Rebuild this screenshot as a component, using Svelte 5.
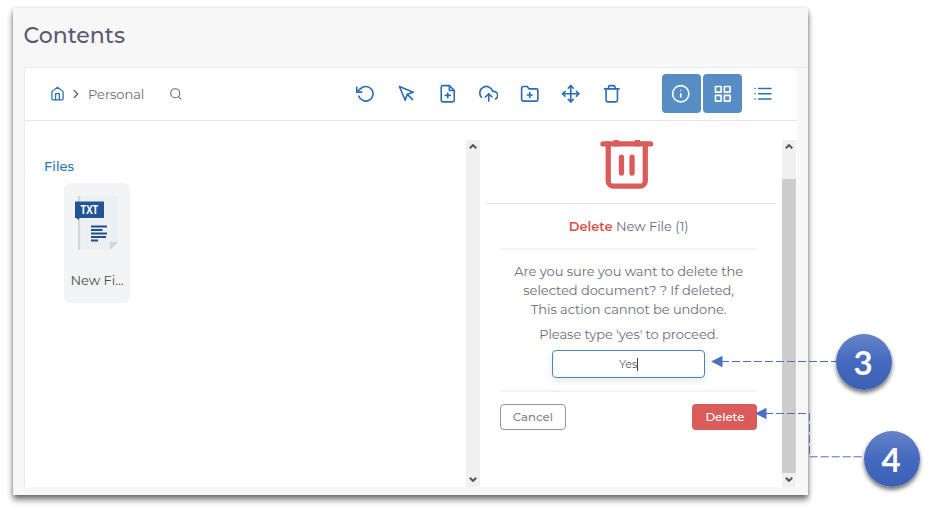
<script>
  const tools = [
    { name: 'undo', paths: ['M1 4v6h6', 'M3.51 15a9 9 0 1 0 2.13-9.36L1 10'] },
    { name: 'select', paths: ['M3 3l7.07 16.97 2.51-7.39 7.39-2.51L3 3z', 'M13 13l6 6'] },
    { name: 'new file', paths: ['M14 2H6a2 2 0 0 0-2 2v16a2 2 0 0 0 2 2h12a2 2 0 0 0 2-2V8z', 'M14 2v6h6', 'M12 11v6', 'M9 14h6'] },
    { name: 'upload', paths: ['M16 16l-4-4-4 4', 'M12 12v9', 'M20.39 18.39A5 5 0 0 0 18 9h-1.26A8 8 0 1 0 3 16.3'] },
    { name: 'new folder', paths: ['M22 19a2 2 0 0 1-2 2H4a2 2 0 0 1-2-2V5a2 2 0 0 1 2-2h5l2 3h9a2 2 0 0 1 2 2z', 'M12 10.5v6', 'M9 13.5h6'] },
    { name: 'move', paths: ['M5 9l-3 3 3 3', 'M9 5l3-3 3 3', 'M15 19l-3 3-3-3', 'M19 9l3 3-3 3', 'M2 12h20', 'M12 2v20'] },
    { name: 'trash', paths: ['M3 6h18', 'M19 6v14a2 2 0 0 1-2 2H7a2 2 0 0 1-2-2V6m3 0V4a2 2 0 0 1 2-2h4a2 2 0 0 1 2 2v2'] }
  ];
  const views = [
    { name: 'info', on: true, paths: ['M22 12a10 10 0 1 1-20 0 10 10 0 0 1 20 0z', 'M12 16v-4', 'M12 8h.01'] },
    { name: 'grid', on: true, paths: ['M3 3h7v7H3z', 'M14 3h7v7h-7z', 'M14 14h7v7h-7z', 'M3 14h7v7H3z'] },
    { name: 'list', on: false, paths: ['M7 5.500h15', 'M7 12h15', 'M7 18.500h15', 'M2.500 5.500h.01', 'M2.500 12h.01', 'M2.500 18.500h.01'] }
  ];
</script>

{#snippet icon(paths, size)}
  <svg class="icon" width={size} height={size} viewBox="0 0 24 24">
    {#each paths as d}<path {d} />{/each}
  </svg>
{/snippet}

{#snippet arrow(d)}
  <div class="arrow"><svg width="8" height="5" viewBox="0 0 8 5"><path {d} /></svg></div>
{/snippet}

<div class="stage">
  <main class="frame">
    <h1>Contents</h1>
    <section class="panel">
      <header>
        <nav class="crumbs">
          <span class="home">{@render icon(['M3 9l9-7 9 7v11a2 2 0 0 1-2 2H5a2 2 0 0 1-2-2z', 'M9 22V12h6v10'], 15)}</span>
          <span class="chev">{@render icon(['M9 18l6-6-6-6'], 14)}</span>
          <span class="crumb">Personal</span>
          <span class="search">{@render icon(['M19 11a8 8 0 1 1-16 0 8 8 0 0 1 16 0z', 'M21 21l-4.35-4.35'], 13.500)}</span>
        </nav>
        <div class="tools">
          {#each tools as t}<button aria-label={t.name}>{@render icon(t.paths, 19.500)}</button>{/each}
        </div>
        <div class="views">
          {#each views as v}<button class:on={v.on} aria-label={v.name}>{@render icon(v.paths, 19.500)}</button>{/each}
        </div>
      </header>
      <div class="body">
        <div class="files">
          <h2>Files</h2>
          <div class="file">
            <svg width="46" height="56" viewBox="0 0 46 56">
              <path d="M3 1h40v46l-8 8H3z" fill="#ecf0f3" />
              <path d="M3 1h2.200v54H3z" fill="#cfd8df" />
              <path d="M35 47h8l-8 8z" fill="#cfd6dc" />
              <path d="M0 22h4v3z" fill="#163f75" />
              <path d="M0 6.500h29V23H0z" fill="#215596" />
              <text x="5.600" y="18.500" textLength="17.600" lengthAdjust="spacingAndGlyphs">TXT</text>
              <path d="M16 31.500h16M16 35h11.500M16 38.500h16M16 42h15M16 45.500h7" stroke="#214f8c" stroke-width="2" fill="none" />
            </svg>
            <span>New Fi...</span>
          </div>
        </div>
        <div class="scroll">{@render arrow('M.8 4.300L4 1.100l3.200 3.200')}<i></i>{@render arrow('M.8.700L4 3.900 7.200.700')}</div>
        <div class="side">
          <div class="bigtrash">
            {@render icon(['M3 6h18', 'M19 6v14a2 2 0 0 1-2 2H7a2 2 0 0 1-2-2V6m3 0V4a2 2 0 0 1 2-2h4a2 2 0 0 1 2 2v2', 'M10 11v6', 'M14 11v6'], 63.500)}
          </div>
          <div class="dialog">
            <p class="head"><b>Delete</b> <span>New File (1)</span></p>
            <div class="msg">
              <p>Are you sure you want to delete the</p>
              <p>selected document? ? If deleted,</p>
              <p>This action cannot be undone.</p>
              <p class="prompt">Please type 'yes' to proceed.</p>
              <div class="input"><span>Yes</span><i></i></div>
            </div>
            <footer>
              <button class="cancel">Cancel</button>
              <button class="delete">Delete</button>
            </footer>
          </div>
        </div>
        <div class="scroll thumbed">{@render arrow('M.8 4.300L4 1.100l3.200 3.200')}<i></i>{@render arrow('M.8.700L4 3.900 7.200.700')}</div>
      </div>
    </section>
  </main>

  <svg class="lines" width="938" height="512" viewBox="0 0 938 512">
    <path d="M721 361.500H836M765 413.500H809.500V456.800H864" />
    <path class="tip" d="M711 361.500l11.500-5.800v11.600zM755 413.500l11.500-5.800v11.600z" />
  </svg>
  <div class="badge three">3</div>
  <div class="badge four">4</div>
</div>

<style>
  :global(body) { background: #fff; overflow: hidden; }
  .stage { position: relative; width: 938px; height: 512px; box-sizing: border-box; padding: 8px 0 0 13px; font-family: Montserrat, Inter, "Open Sans", sans-serif; color: #6e6b7b; overflow: hidden; }
  .stage * { box-sizing: border-box; }
  h1, h2, p { margin: 0; font-weight: 400; white-space: nowrap; }
  button { font-family: inherit; padding: 0; border: 0; background: none; color: inherit; }
  .frame { width: 795px; height: 487px; background: #f7f7f7; box-shadow: 0 5px 6px rgba(0,0,0,.48), 0 1px 4px rgba(0,0,0,.25); }
  h1 { height: 59px; padding: 13px 0 0 10.500px; font-size: 22px; line-height: 30px; font-weight: 500; color: #5e5873; }
  .panel { width: 784px; height: 420px; margin-left: 11px; border: solid #ebe9f1; border-width: 1px 0 0 1px; display: flex; flex-direction: column; }
  header { width: 772px; height: 53px; background: #fff; border-bottom: 1px solid #e6e5ec; display: flex; align-items: center; border-top-right-radius: 4px; padding-bottom: 1px; }
  .icon { display: block; fill: none; stroke: currentColor; stroke-width: 2; stroke-linecap: round; stroke-linejoin: round; }
  .crumbs { width: 321px; display: flex; align-items: center; padding-left: 25px; font-size: 13px; }
  .home { color: #2c6fb7; }
  .chev { margin-left: 4px; color: #5e5873; }
  .crumb { width: 56px; margin-left: 5px; letter-spacing: -.05px; }
  .search { margin-left: 25px; }
  .tools { display: flex; gap: 2px; color: #2a6db5; }
  .tools button, .views button { width: 39px; height: 39px; display: grid; place-items: center; }
  .views { display: flex; gap: 2.300px; margin-left: 30.700px; color: #2a6db5; }
  .views .on { background: #568dc4; color: #fff; border-radius: 4px; }
  .views button:last-child { width: 37px; }
  .body { width: 772px; height: 366px; background: #fff; padding-top: 19px; display: flex; }
  .files { width: 441px; padding: 16px 0 0 19px; }
  h2 { font-size: 13px; line-height: 20px; font-weight: 500; color: #2c76bd; }
  .file { width: 66px; height: 119.500px; margin: 7px 0 0 20px; padding-top: 12px; background: #f3f4f6; border-radius: 6px; display: flex; flex-direction: column; align-items: center; font-size: 13px; }
  .file svg { margin-left: 1.500px; }
  .file span { margin-top: 21px; line-height: 16px; color: #4d4d4d; }
  .file text { font: 700 12px "Open Sans", sans-serif; fill: #fff; }
  .scroll { width: 14px; height: 347px; background: #f0f0f0; display: flex; flex-direction: column; }
  .scroll i { flex: 1; }
  .thumbed i { background: #cdcdcd; margin-top: 25px; }
  .arrow { height: 14px; padding-bottom: 1px; display: grid; place-items: center; }
  .arrow path { fill: none; stroke: #555; stroke-width: 2; }
  .side { width: 302.400px; height: 347px; padding: 0 6px 0 6.400px; overflow: hidden; }
  .bigtrash { height: 64px; border-bottom: 1px solid #e3e2e8; overflow: hidden; color: #d95c5a; display: flex; justify-content: center; }
  .bigtrash .icon { margin: -12.500px 9px 0 0; flex: none; }
  .dialog { padding: 0 19px 0 13.500px; }
  .head { height: 46px; line-height: 45px; border-bottom: 2px solid #f3f2f6; font-size: 13px; text-align: center; letter-spacing: -.03px; }
  .head b { font-weight: 600; color: #d9534f; }
  .msg { height: 142px; padding-top: 12px; border-bottom: 2px solid #f3f2f6; font-size: 13px; line-height: 19px; letter-spacing: -.05px; display: flex; flex-direction: column; align-items: center; }
  .prompt { margin-top: 6px; }
  .input { width: 153px; height: 28px; margin-top: 6px; border: 1.500px solid #4586c5; border-radius: 4px; box-shadow: 0 3px 8px rgba(34,41,47,.1); display: flex; align-items: center; justify-content: center; font-size: 11px; color: #5b586a; }
  .input i { width: 1px; height: 13px; background: #444; }
  footer { padding-top: 12px; display: flex; justify-content: space-between; }
  footer button { height: 26px; border-radius: 4px; font-size: 11.700px; font-weight: 500; }
  .cancel { width: 66px; border: 1px solid #94969c; color: #82868b; }
  .delete { width: 65px; background: #d95c5a; color: #fff; }
  .lines { position: absolute; left: 0; top: 0; fill: none; stroke: #4a70bf; stroke-width: 1; stroke-dasharray: 8 3; }
  .tip { fill: #4a70bf; stroke: none; }
  .badge { position: absolute; width: 56px; height: 56px; border-radius: 50%; background: linear-gradient(#6683c8, #4469bf 50%, #3b60b6); box-shadow: 0 3px 4px rgba(0,0,0,.55); color: #fff; font: 700 33px/56px Lato, "Open Sans", sans-serif; text-align: center; padding-right: 2px; }
  .three { left: 836px; top: 334px; }
  .four { left: 864px; top: 431px; }
</style>
